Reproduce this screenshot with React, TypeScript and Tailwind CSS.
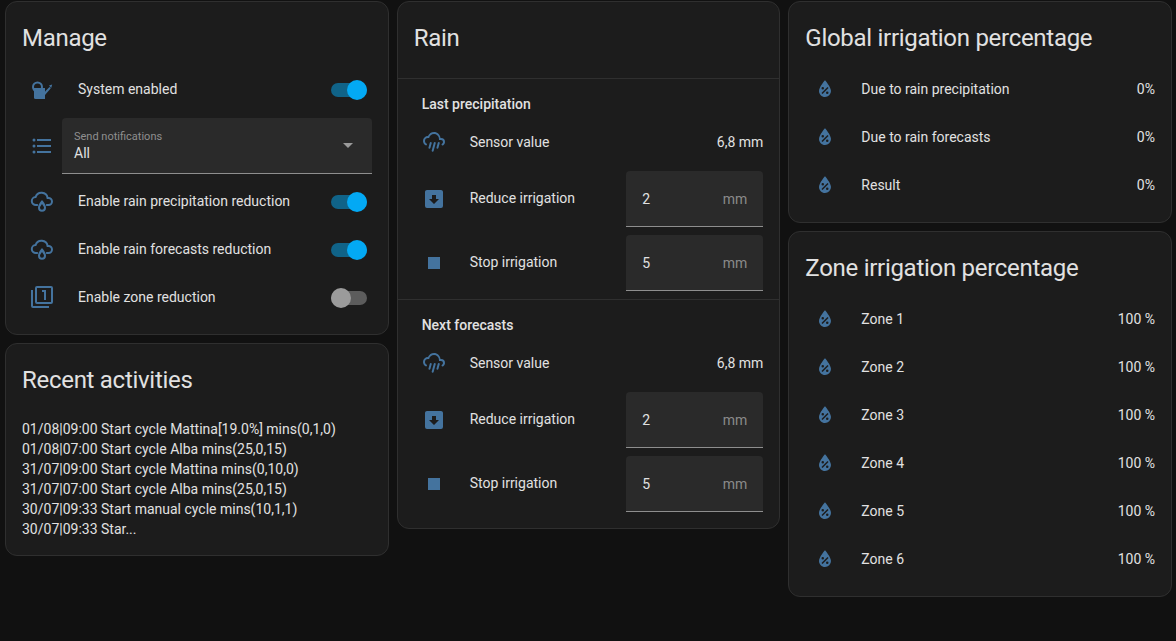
import React from 'react';

const POURING =
  'M9,12C9.53,12.14 9.85,12.69 9.71,13.22L8.41,18.05C8.27,18.59 7.72,18.9 7.19,18.76C6.65,18.62 6.34,18.07 6.5,17.54L7.78,12.71C7.92,12.17 8.47,11.86 9,12M13,12C13.53,12.14 13.85,12.69 13.71,13.22L11.64,20.95C11.5,21.5 10.95,21.8 10.41,21.66C9.88,21.5 9.56,20.97 9.7,20.43L11.78,12.71C11.92,12.17 12.47,11.86 13,12M17,12C17.53,12.14 17.85,12.69 17.71,13.22L16.41,18.05C16.27,18.59 15.72,18.9 15.19,18.76C14.65,18.62 14.34,18.07 14.5,17.54L15.78,12.71C15.92,12.17 16.47,11.86 17,12M17,10V9A5,5 0 0,0 12,4C9.5,4 7.45,5.82 7.06,8.19C6.73,8.07 6.37,8 6,8A3,3 0 0,0 3,11C3,12.11 3.6,13.08 4.5,13.6V13.59C5,13.87 5.14,14.5 4.87,14.96C4.59,15.43 4,15.6 3.5,15.32V15.33C2,14.47 1,12.85 1,11A5,5 0 0,1 6,6C7,3.65 9.3,2 12,2C15.43,2 18.24,4.66 18.5,8.03L19,8A4,4 0 0,1 23,12C23,13.5 22.2,14.77 21,15.46V15.46C20.5,15.73 19.91,15.57 19.63,15.09C19.36,14.61 19.5,14 20,13.72V13.73C20.6,13.39 21,12.74 21,12A2,2 0 0,0 19,10H17Z';
const LIST =
  'M7,5H21V7H7V5M7,13V11H21V13H7M4,4.5A1.5,1.5 0 0,1 5.5,6A1.5,1.5 0 0,1 4,7.5A1.5,1.5 0 0,1 2.5,6A1.5,1.5 0 0,1 4,4.5M4,10.5A1.5,1.5 0 0,1 5.5,12A1.5,1.5 0 0,1 4,13.5A1.5,1.5 0 0,1 2.5,12A1.5,1.5 0 0,1 4,10.5M7,19V17H21V19H7M4,16.5A1.5,1.5 0 0,1 5.5,18A1.5,1.5 0 0,1 4,19.5A1.5,1.5 0 0,1 2.5,18A1.5,1.5 0 0,1 4,16.5Z';
const MULTI_ONE =
  'M14,15H16V5H12V7H14V15M21,17V3H7V17H21M21,1A2,2 0 0,1 23,3V17A2,2 0 0,1 21,19H7A2,2 0 0,1 5,17V3A2,2 0 0,1 7,1H21M3,5V21H19V23H3A2,2 0 0,1 1,21V5H3Z';
const ARROW_BOX =
  'M19,3H5C3.89,3 3,3.89 3,5V19A2,2 0 0,0 5,21H19A2,2 0 0,0 21,19V5C21,3.89 20.1,3 19,3M12,17L7,12H10V8H14V12H17L12,17Z';
const WATER_PERCENT =
  'M12,3.25C12,3.25 6,10 6,14C6,17.32 8.69,20 12,20A6,6 0 0,0 18,14C18,10 12,3.25 12,3.25M14.47,9.97L15.53,11.03L9.53,17.03L8.47,15.97M9.75,10A1.25,1.25 0 0,1 11,11.25A1.25,1.25 0 0,1 9.75,12.5A1.25,1.25 0 0,1 8.5,11.25A1.25,1.25 0 0,1 9.75,10M14.25,14.5A1.25,1.25 0 0,1 15.5,15.75A1.25,1.25 0 0,1 14.25,17A1.25,1.25 0 0,1 13,15.75A1.25,1.25 0 0,1 14.25,14.5Z';

const Icon = ({ children }: { children: React.ReactNode }) => (
  <svg viewBox="0 0 24 24" className="w-6 h-6 shrink-0 fill-[#44739e]">
    {children}
  </svg>
);

const WateringCan = () => (
  <Icon>
    <circle cx="7.5" cy="10" r="4.5" fill="none" stroke="#44739e" strokeWidth="2" />
    <path d="M4,11H15V22H5.5A1.5,1.5 0 0,1 4,20.5Z" />
    <path d="M15,14.5L19.5,10L20.8,11.2L15,18Z" />
    <path d="M19,8.6L22.2,7.6L21.2,11Z" />
  </Icon>
);

const CloudDrop = () => (
  <Icon>
    <path
      d="M7.2,16H6A4,4 0 0,1 5.6,8A6.2,6.2 0 0,1 17.6,9H18.5A3.5,3.5 0 0,1 18.5,16H16.8"
      fill="none"
      stroke="#44739e"
      strokeWidth="2"
      strokeLinecap="round"
    />
    <path
      fillRule="evenodd"
      d="M12,11C12,11 8,15.4 8,18.7A4,4 0 0,0 16,18.7C16,15.4 12,11 12,11M12,15C12.8,16.2 14,17.7 14,18.7A2,2 0 0,1 10,18.7C10,17.7 11.2,16.2 12,15Z"
    />
  </Icon>
);

const PathIcon = ({ d }: { d: string }) => (
  <Icon>
    <path d={d} />
  </Icon>
);

const Toggle = ({ on = true }: { on?: boolean }) => (
  <div className="relative w-9 h-3.5 mt-0.5 mr-[5px] rounded-full shrink-0">
    <div className={`absolute inset-0 rounded-full ${on ? 'bg-[#03a9f4] opacity-50' : 'bg-[#9b9b9b] opacity-50'}`} />
    <div
      className={`absolute -top-[3px] w-5 h-5 rounded-full ${on ? 'right-0 bg-[#03a9f4]' : 'left-0 bg-[#9b9b9b]'}`}
    />
  </div>
);

const Card = ({ title, children, className = '' }: { title: string; children: React.ReactNode; className?: string }) => (
  <div className={`rounded-xl border border-[#2f2f2f] bg-[#1c1c1c] ${className}`}>
    <h2 className="px-4 pt-5 text-2xl leading-8 font-normal tracking-[-0.012em] text-[#e1e1e1]">{title}</h2>
    {children}
  </div>
);

const Row = ({ icon, label, children }: { icon: React.ReactNode; label: string; children?: React.ReactNode }) => (
  <div className="flex items-center h-10 pl-2">
    {icon}
    <span className="ml-6 flex-1 text-sm text-[#e1e1e1]">{label}</span>
    {children}
  </div>
);

const NumberField = ({ value }: { value: string }) => (
  <div className="flex items-center justify-between w-[137px] h-14 px-4 bg-[#2a2a2a] rounded-t border-b border-[#8e8e8e] text-sm">
    <span className="text-[#e1e1e1]">{value}</span>
    <span className="text-[#8a8a8a]">mm</span>
  </div>
);

const RainSection = ({ title }: { title: string }) => (
  <div className="pl-6 pr-4 pt-[15px]">
    <div className="text-sm leading-5 font-medium text-[#e1e1e1]">{title}</div>
    <div className="flex items-center h-10 mt-2">
      <PathIcon d={POURING} />
      <span className="ml-6 flex-1 text-sm text-[#e1e1e1]">Sensor value</span>
      <span className="text-sm text-[#e1e1e1]">6,8 mm</span>
    </div>
    <div className="flex items-center mt-[9px]">
      <PathIcon d={ARROW_BOX} />
      <span className="ml-6 mb-0.5 flex-1 text-sm text-[#e1e1e1]">Reduce irrigation</span>
      <NumberField value="2" />
    </div>
    <div className="flex items-center mt-2">
      <PathIcon d="M18,18H6V6H18V18Z" />
      <span className="ml-6 mb-0.5 flex-1 text-sm text-[#e1e1e1]">Stop irrigation</span>
      <NumberField value="5" />
    </div>
  </div>
);

const activities = [
  '01/08|09:00 Start cycle Mattina[19.0%] mins(0,1,0)',
  '01/08|07:00 Start cycle Alba mins(25,0,15)',
  '31/07|09:00 Start cycle Mattina mins(0,10,0)',
  '31/07|07:00 Start cycle Alba mins(25,0,15)',
  '30/07|09:33 Start manual cycle mins(10,1,1)',
  '30/07|09:33 Star...'
];

const PercentRow = ({ label, value }: { label: string; value: string }) => (
  <div className="flex items-center h-10 pl-2">
    <PathIcon d={WATER_PERCENT} />
    <span className="ml-6 flex-1 text-sm text-[#e1e1e1]">{label}</span>
    <span className="text-sm text-[#e1e1e1]">{value}</span>
  </div>
);

const App: React.FC = () => {
  return (
    <div className="min-h-screen pl-[5px] pr-1 pt-px bg-[#111111] font-['Roboto',sans-serif] overflow-hidden">
      <div className="grid grid-cols-3 gap-2 items-start">
        {/* Left column */}
        <div className="flex flex-col gap-2">
          <Card title="Manage">
            <div className="flex flex-col px-4 pt-[15px] pb-[17px]">
              <Row icon={<WateringCan />} label="System enabled">
                <Toggle />
              </Row>
              <div className="flex items-center pl-2 mt-[9px]">
                <PathIcon d={LIST} />
                <div className="relative flex-1 ml-2 h-14 px-3 pt-3 bg-[#2a2a2a] rounded-t border-b border-[#8e8e8e]">
                  <div className="text-[11px] leading-[13px] text-[#8f8f8f]">Send notifications</div>
                  <div className="text-sm leading-5 text-[#e1e1e1]">All</div>
                  <div className="absolute right-[19px] top-[25px] w-0 h-0 border-x-[5px] border-x-transparent border-t-[5px] border-t-[#9a9a9a]" />
                </div>
              </div>
              <div className="mt-[7px]">
                <Row icon={<CloudDrop />} label="Enable rain precipitation reduction">
                  <Toggle />
                </Row>
              </div>
              <div className="mt-2">
                <Row icon={<CloudDrop />} label="Enable rain forecasts reduction">
                  <Toggle />
                </Row>
              </div>
              <div className="mt-2">
                <Row icon={<PathIcon d={MULTI_ONE} />} label="Enable zone reduction">
                  <Toggle on={false} />
                </Row>
              </div>
            </div>
          </Card>
          <Card title="Recent activities">
            <div className="px-4 pt-[23px] pb-4 text-sm leading-5 text-[#e1e1e1]">
              {activities.map((a) => (
                <div key={a}>{a}</div>
              ))}
            </div>
          </Card>
        </div>

        {/* Middle column */}
        <Card title="Rain">
          <div className="mt-6 border-t border-[#2f2f2f]">
            <RainSection title="Last precipitation" />
            <div className="mt-2 border-t border-[#2f2f2f]" />
            <RainSection title="Next forecasts" />
            <div className="h-4" />
          </div>
        </Card>

        {/* Right column */}
        <div className="flex flex-col gap-2">
          <Card title="Global irrigation percentage">
            <div className="flex flex-col gap-2 px-4 pt-[15px] pb-[17px]">
              <PercentRow label="Due to rain precipitation" value="0%" />
              <PercentRow label="Due to rain forecasts" value="0%" />
              <PercentRow label="Result" value="0%" />
            </div>
          </Card>
          <Card title="Zone irrigation percentage">
            <div className="flex flex-col gap-2 px-4 pt-[15px] pb-[17px]">
              {[1, 2, 3, 4, 5, 6].map((z) => (
                <PercentRow key={z} label={`Zone ${z}`} value="100 %" />
              ))}
            </div>
          </Card>
        </div>
      </div>
    </div>
  );
};

export default App;
